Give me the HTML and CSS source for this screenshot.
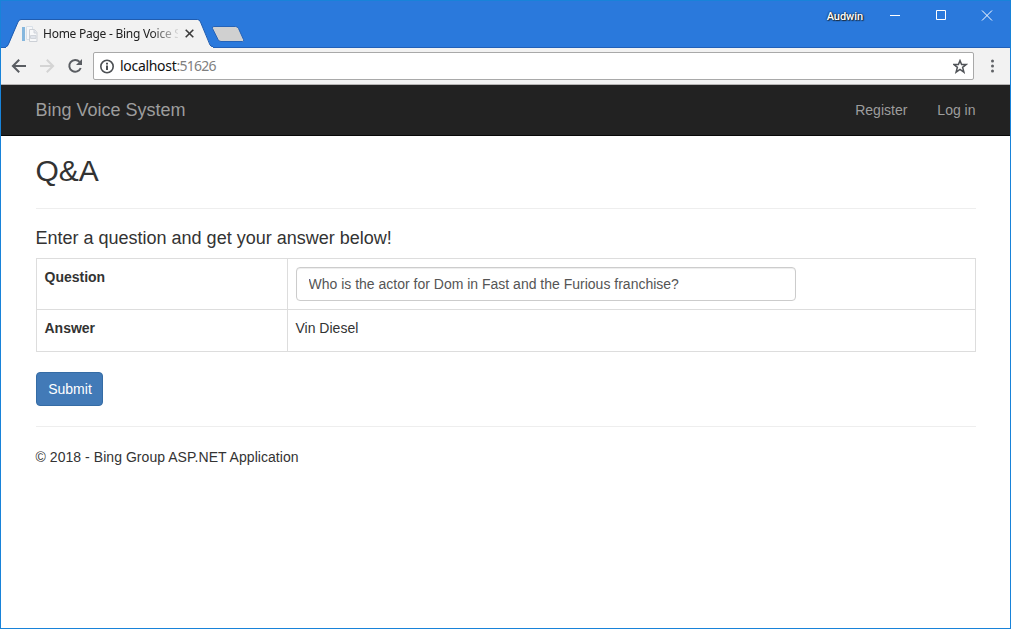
FILE: index.html
```html
<!DOCTYPE html>
<html lang="en">
<head>
<meta charset="utf-8">
<title>Home Page - Bing Voice System</title>
<link rel="stylesheet" href="styles.css">
</head>
<body>
<div class="window">
  <div class="titlebar">
    <div class="tab">
      <svg class="tab-shape" width="207" height="29" viewBox="0 0 207 29">
        <path d="M0 29V28Q1.500 28 2.300 26L12 3Q13 .7 15 .7H191.500Q193.500 .7 194.500 3L204.500 26.500Q205.300 28 207 28V29Z" fill="#f2f2f2"/>
        <path d="M0 27.500Q1.500 27.500 2.300 25.500L12 3Q13 .5 15 .5H191.500Q193.500 .5 194.500 3L204 26Q204.800 27.500 207 27.500" fill="none" stroke="#1f5cb0"/>
      </svg>
      <svg class="favicon" width="16" height="16" viewBox="0 0 16 16">
        <path d="M0 1h3v14H0z" fill="#6aa9da"/>
        <path d="M4.500 .5h6v13h-6z" fill="#f7f9fb" stroke="#d3dce6"/>
        <path d="M7.500 3.500h5l2.500 3v9H7.500z" fill="#fafbfd" stroke="#c3c8d0"/>
        <path d="M12 4v3h3M8.500 9.500h5.500v3H8.500z" fill="#dce1ea" stroke="#c9ced6"/>
      </svg>
      <span class="tab-title">Home Page - Bing Voice S</span>
      <svg class="tab-close" width="9" height="9" viewBox="0 0 9 9"><path d="M.7 .7l7.600 7.600M8.300 .7L.7 8.300" stroke="#3c3c3c" stroke-width="1.600"/></svg>
    </div>
    <svg class="new-tab" width="35" height="18" viewBox="0 0 35 18"><path d="M3 1.500H24.500Q26.500 1.500 27.500 3.500L32.500 14.500Q33.500 16.500 31.500 16.500H10Q8 16.500 7 14.500L1.500 3.500Q.5 1.500 3 1.500Z" fill="#d0d0d0" stroke="#2563b8"/></svg>
    <span class="user">Audwin</span>
    <svg class="controls" width="103" height="12" viewBox="0 0 103 12" fill="none" stroke="#fff">
      <path d="M0 5.500h10M46.500 .5h9v9h-9zM92 .5l10 10M102 .5l-10 10"/>
    </svg>
  </div>
  <div class="toolbar">
    <svg class="nav-icons" width="72" height="18" viewBox="0 0 72 18" fill="none" stroke-width="2">
      <path d="M15 9H2M8.200 2.700L1.900 9l6.300 6.300" stroke="#5a5d62"/>
      <path d="M29 9h13M35.800 2.700L42.100 9l-6.300 6.300" stroke="#d4d4d4"/>
      <path d="M68.600 4.900A5.900 5.900 0 1 0 69.700 11" stroke="#5a5d62"/>
      <path d="M71 2v6h-6z" fill="#5a5d62"/>
    </svg>
    <div class="address">
      <svg width="15" height="15" viewBox="0 0 15 15"><circle cx="8" cy="7.500" r="6.200" fill="none" stroke="#4c4f53" stroke-width="1.600"/><path d="M7 6.500h2V11H7zM7 3.700h2v1.700H7z" fill="#4c4f53"/></svg>
      <span class="url">localhost<span class="port">:51626</span></span>
      <svg class="star" width="15" height="15" viewBox="0 0 15 15"><path d="M7 1.600l1.600 4h4.400L9.600 8.300l1.300 4.800L7 10.400l-3.900 2.700 1.300-4.800L1 5.600h4.400z" fill="none" stroke="#505358" stroke-width="1.500"/></svg>
    </div>
    <svg class="menu" width="4" height="14" viewBox="0 0 4 14" fill="#606266"><circle cx="2.500" cy="2" r="1.500"/><circle cx="2.500" cy="7" r="1.500"/><circle cx="2.500" cy="12" r="1.500"/></svg>
  </div>
  <nav class="navbar">
    <div class="container navbar-inner">
      <a class="brand">Bing Voice System</a>
      <a class="nav-link">Register</a>
      <a class="nav-link">Log in</a>
    </div>
  </nav>
  <main class="container">
    <h2>Q&amp;A</h2>
    <hr>
    <h4>Enter a question and get your answer below!</h4>
    <div class="table">
      <div class="row question">
        <div class="label">Question</div>
        <div class="value"><input class="input" type="text" value="Who is the actor for Dom in Fast and the Furious franchise?"></div>
      </div>
      <div class="row answer">
        <div class="label">Answer</div>
        <div class="value">Vin Diesel</div>
      </div>
    </div>
    <button class="submit">Submit</button>
    <hr>
    <footer>© 2018 - Bing Group ASP.NET Application</footer>
  </main>
</div>
</body>
</html>
```
FILE: styles.css
```css
* { box-sizing: border-box; }
body {
  margin: 0;
  font: 14px/20px "Liberation Sans", Arial, sans-serif;
  color: #333;
  background: #fff;
  overflow: hidden;
}
svg { display: block; flex: none; }
.window {
  width: 1011px;
  height: 629px;
  border: 1px solid #1883d9;
  background: #fff;
}
.titlebar {
  display: flex;
  align-items: flex-start;
  height: 47px;
  background: #2a79dc;
  box-shadow: inset 0 -1px #2160b8;
  font-family: "Noto Sans", "Open Sans", sans-serif;
}
.tab {
  position: relative;
  display: flex;
  align-items: center;
  width: 207px;
  height: 29px;
  margin: 18px 0 0 5px;
  padding-left: 16px;
}
.tab-shape { position: absolute; left: 0; top: 0; }
.favicon { position: relative; opacity: .8; }
.tab-title {
  position: relative;
  width: 135px;
  margin-left: 5px;
  white-space: nowrap;
  font-size: 12px;
  letter-spacing: -.26px;
  color: #222;
  -webkit-mask-image: linear-gradient(to right, #000 108px, transparent 138px);
  mask-image: linear-gradient(to right, #000 108px, transparent 138px);
}
.tab-close { position: relative; margin-left: 7px; }
.new-tab { margin: 24px 0 0 -2px; }
.user {
  margin: 8px 0 0 auto;
  font: 500 11px/16px Roboto, sans-serif;
  letter-spacing: -.05px;
  color: #fff;
  text-shadow: 0 0 2px #000, 1px 1px 1px #234;
}
.controls { margin: 9px 17px 0 27px; }
.toolbar {
  display: flex;
  align-items: center;
  height: 37px;
  padding: 0 16px 0 10px;
  background: #f2f2f2;
  border-bottom: 1px solid #b6b4b4;
}
.address {
  display: flex;
  align-items: center;
  width: 881px;
  height: 28px;
  margin-left: 10px;
  padding: 0 5px;
  border: 1px solid #a9a9a9;
  border-radius: 2px;
  background: #fff;
}
.url {
  margin-left: 6px;
  font: 14px/20px "Noto Sans", "Open Sans", sans-serif;
  letter-spacing: -.3px;
  color: #111;
}
.port { color: #808080; letter-spacing: -.75px; }
.star { margin-left: auto; }
.menu { margin-left: auto; }
.container { width: 970px; margin: 0 auto; padding: 0 15px; }
.navbar { height: 51px; background: #222; border-bottom: 1px solid #080808; }
.navbar-inner { display: flex; align-items: center; height: 50px; }
.brand { margin-right: auto; font-size: 18px; color: #9d9d9d; }
.nav-link { margin-left: 30px; color: #9d9d9d; }
h2 { margin: 18px 0 21px; font-size: 30px; line-height: 33px; font-weight: 400; }
h4 { margin: -1px 0 10px; font-size: 18px; line-height: 20px; font-weight: 400; }
hr { height: 1px; margin: 20px 0; border: 0; background: #eee; }
.table { border: 1px solid #ddd; margin-bottom: 20px; }
.row { display: flex; }
.question { height: 51px; border-bottom: 1px solid #ddd; }
.answer { height: 41px; }
.label { width: 251px; padding: 8px; font-weight: 700; border-right: 1px solid #ddd; }
.value { flex: 1; padding: 8px; }
.input {
  display: block;
  width: 500px;
  height: 34px;
  padding: 6px 12px;
  font: inherit;
  color: #555;
  background: #fff;
  border: 1px solid #ccc;
  border-radius: 4px;
  box-shadow: inset 0 1px 1px rgba(0, 0, 0, .075);
}
.submit {
  display: block;
  width: 67px;
  height: 34px;
  padding: 6px 0 6px 2px;
  font: inherit;
  color: #fff;
  background: #427ab7;
  border: 1px solid #356ca5;
  border-radius: 4px;
}
footer { letter-spacing: .05px; }
```
